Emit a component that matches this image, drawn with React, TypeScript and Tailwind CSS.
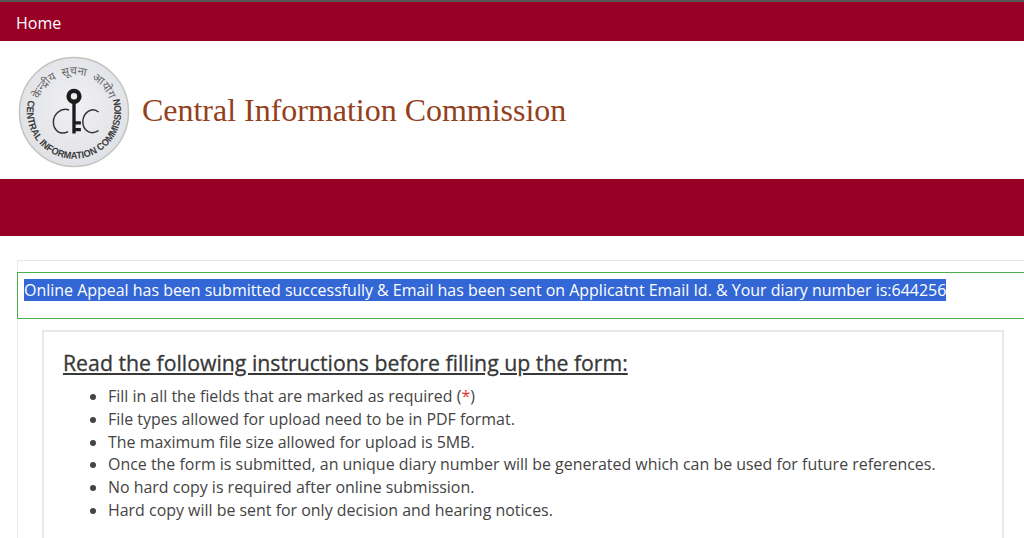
const instructions = [
  'File types allowed for upload need to be in PDF format.',
  'The maximum file size allowed for upload is 5MB.',
  'Once the form is submitted, an unique diary number will be generated which can be used for future references.',
  'No hard copy is required after online submission.',
  'Hard copy will be sent for only decision and hearing notices.',
];

function Logo() {
  return (
    <svg width="112" height="112" viewBox="0 0 114 114" className="shrink-0">
      <defs>
        <path id="arcTop" d="M 22 42 A 38 38 0 0 1 92 42" />
        <path id="arcBottom" d="M 11 43 A 48 48 0 1 0 103 43" />
        <radialGradient id="disc" cx="50%" cy="45%" r="60%">
          <stop offset="0%" stopColor="#f1f1f4" />
          <stop offset="100%" stopColor="#dfe0e5" />
        </radialGradient>
      </defs>
      <circle cx="57" cy="57" r="55.5" fill="url(#disc)" stroke="#c2c4c0" strokeWidth="1.5" />
      <text fontFamily="'Noto Sans', sans-serif" fontSize="11.5" fill="#666" wordSpacing="3">
        <textPath href="#arcTop" startOffset="50%" textAnchor="middle">केन्द्रीय सूचना आयोग</textPath>
      </text>
      <text fontFamily="'Liberation Sans', sans-serif" fontSize="10" fontWeight="700" fill="#3a3a3a">
        <textPath href="#arcBottom" startOffset="2" textLength="176" lengthAdjust="spacingAndGlyphs">CENTRAL INFORMATION COMMISSION</textPath>
      </text>
      <circle cx="57" cy="41" r="5.5" fill="none" stroke="#1c1c1c" strokeWidth="4.5" />
      <path d="M57 47 V79 M57 68 H64 M57 75 H64" stroke="#1c1c1c" strokeWidth="3.4" fill="none" />
      <path d="M52 55 C43 52 36 60 36 67 C36 76 43 81 51 77" stroke="#333" strokeWidth="1.5" fill="none" />
      <path d="M82 57 C75 51 66 58 66 67 C66 76 74 81 82 76" stroke="#333" strokeWidth="1.5" fill="none" />
    </svg>
  );
}

export default function App() {
  return (
    <div className="h-[538px] w-[1024px] overflow-hidden bg-white font-['Open_Sans',sans-serif] text-[#444]">
      <nav className="flex h-[41px] items-center border-t-2 border-[#555] bg-[#990026] pl-4 pt-[2px] text-base text-white">
        Home
      </nav>

      <header className="flex h-[138px] items-center gap-3 pl-[18px] pt-[4px]">
        <Logo />
        <h1 className="-mt-[4px] font-['Liberation_Serif',serif] text-[32px] leading-none tracking-[-0.02px] text-[#93401c]">
          Central Information Commission
        </h1>
      </header>

      <div className="h-[57px] bg-[#990026]" />

      <main className="ml-[17px] mt-6 border-l border-t border-[#e8e8e8] pt-[11px]">
        <div className="-ml-px h-[47px] border-y border-l border-[#4cae4c] pl-[6px] pt-[5px]">
          <span className="bg-[#3367d6] text-[15.96px] leading-[23px] text-white">
            Online Appeal has been submitted successfully &amp; Email has been sent on Applicatnt Email Id. &amp; Your diary number is:644256
          </span>
        </div>

        <section className="ml-[24px] mt-[11px] h-[300px] w-[962px] border-2 border-[#e8e8e8] pl-[19px] pt-[17px]">
          <h2 className="text-[21.27px] leading-[27px] text-[#383838] underline [-webkit-text-stroke:0.3px_#383838]">
            Read the following instructions before filling up the form:
          </h2>
          <ul className="mt-[9px] list-disc pl-[45px] text-[15.95px] leading-[22.8px]">
            <li>
              Fill in all the fields that are marked as required (<span className="text-[#e3342f]">*</span>)
            </li>
            {instructions.map((line) => (
              <li key={line}>{line}</li>
            ))}
          </ul>
        </section>
      </main>
    </div>
  );
}
